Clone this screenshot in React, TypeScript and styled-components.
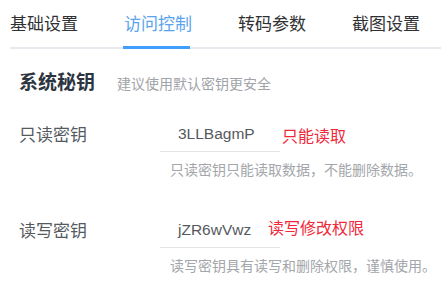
import React from "react";
import styled, { createGlobalStyle } from "styled-components";

const Global = createGlobalStyle`
  html, body { margin: 0; padding: 0; background: #ffffff; }
  body { font-family: "Liberation Sans", "Noto Sans CJK SC", sans-serif; }
  * { box-sizing: border-box; }
`;

const Page = styled.div`
  width: 441px;
  height: 288px;
  overflow: hidden;
  background: #fff;
`;

const TabNav = styled.div`
  display: flex;
  margin-left: 10px;
  border-bottom: 2px solid #e7e9ee;
`;

const Tab = styled.div<{ $active?: boolean }>`
  position: relative;
  flex: 0 0 114px;
  padding: 13px 0 10px;
  font-size: 17px;
  line-height: 24px;
  color: ${(p) => (p.$active ? "#5aa4ee" : "#303133")};
  white-space: nowrap;
`;

const ActiveBar = styled.span`
  position: absolute;
  left: -1px;
  bottom: -2px;
  width: 67px;
  height: 3px;
  background: #409eff;
`;

const Section = styled.div`
  padding-left: 19px;
`;

const TitleRow = styled.div`
  display: flex;
  align-items: baseline;
  gap: 22px;
  margin-top: 21px;
`;

const Title = styled.div`
  font-size: 19px;
  line-height: 26px;
  font-weight: 700;
  color: #2c3440;
`;

const Subtitle = styled.div`
  font-size: 14px;
  line-height: 20px;
  color: #a0a3a8;
`;

const Row = styled.div<{ $top: number }>`
  display: flex;
  margin-top: ${(p) => p.$top}px;
`;

const Label = styled.div`
  width: 141px;
  font-size: 17px;
  line-height: 24px;
  color: #555a60;
  padding-top: 4px;
`;

const FieldCol = styled.div`
  display: flex;
  flex-direction: column;
`;

const FieldLine = styled.div`
  display: flex;
  align-items: flex-start;
`;

const Input = styled.div`
  width: 120px;
  height: 32px;
  padding: 2px 0 0 18px;
  border-bottom: 1px solid #e2e4e8;
  font-size: 15.5px;
  line-height: 24px;
  color: #55595e;
`;

const Note = styled.div<{ $shift: number; $drop: number }>`
  margin-left: ${(p) => p.$shift}px;
  padding-top: ${(p) => p.$drop}px;
  font-size: 16px;
  line-height: 22px;
  color: #f0283a;
  white-space: nowrap;
`;

const Help = styled.div`
  margin: 8px 0 0 10px;
  font-size: 14px;
  line-height: 20px;
  color: #a3a6aa;
  white-space: nowrap;
`;

const tabs = ["基础设置", "访问控制", "转码参数", "截图设置"];

const keys = [
  {
    label: "只读密钥",
    value: "3LLBagmP",
    note: "只能读取",
    shift: 2,
    drop: 6,
    help: "只读密钥只能读取数据，不能删除数据。",
    top: 24,
  },
  {
    label: "读写密钥",
    value: "jZR6wVwz",
    note: "读写修改权限",
    shift: -12,
    drop: 2,
    help: "读写密钥具有读写和删除权限，谨慎使用。",
    top: 36,
  },
];

export default function App() {
  return (
    <Page>
      <Global />
      <TabNav>
        {tabs.map((t, i) => (
          <Tab key={t} $active={i === 1}>
            {t}
            {i === 1 && <ActiveBar />}
          </Tab>
        ))}
      </TabNav>
      <Section>
        <TitleRow>
          <Title>系统秘钥</Title>
          <Subtitle>建议使用默认密钥更安全</Subtitle>
        </TitleRow>
        {keys.map((k) => (
          <Row key={k.label} $top={k.top}>
            <Label>{k.label}</Label>
            <FieldCol>
              <FieldLine>
                <Input>{k.value}</Input>
                <Note $shift={k.shift} $drop={k.drop}>
                  {k.note}
                </Note>
              </FieldLine>
              <Help>{k.help}</Help>
            </FieldCol>
          </Row>
        ))}
      </Section>
    </Page>
  );
}
